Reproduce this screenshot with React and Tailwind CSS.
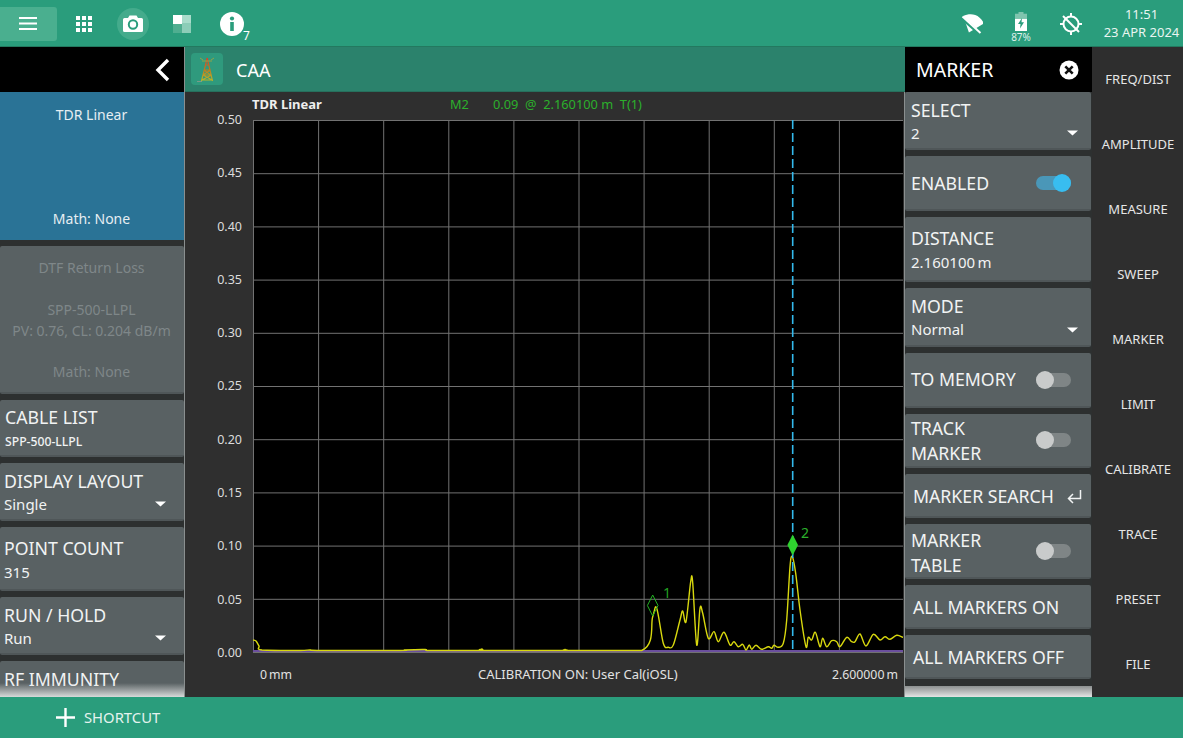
const tracePts = [[253,640],[256,641],[259,646],[262,650],[300,650.5],[310,650],[320,650.5],[400,650.5],[405,650],[425,649.5],[430,650.5],[478,650.5],[482,649],[486,650.5],[560,650.5],[565,649.5],[570,650.5],[641.7,650.5],[652.7,616.7],[656.7,608.3],[663.3,643.3],[668.3,647.3],[673.3,645],[680,620],[682.7,611],[686,621.7],[690.7,581.7],[692.7,582.7],[696.7,645],[700,608.3],[702.7,613.3],[708.3,638.3],[714,631.7],[718.3,641.7],[724,632.3],[730,645],[734,641.7],[738.3,646.7],[742.7,644.3],[746,650],[749.3,645],[751.7,649.3],[756,645.3],[761.7,649.3],[768.3,646.7],[771.7,648.3],[774,645.3],[778.3,647.3],[783.3,643.3],[786.7,620],[790,566.7],[792.3,556.7],[795.7,573.3],[800,610],[806,646.7],[808.3,637.3],[811.7,640],[815.3,632.3],[820,646.7],[822.7,638.3],[826.7,646.7],[831.7,640.7],[836.7,641.7],[840,646.7],[846.7,637.3],[851.7,641.7],[855,641.7],[860,634],[866,646],[873.3,634.3],[880,640],[885,636.7],[890,639.3],[896.7,635.3],[903,637.3]];

function smooth(pts) {
  let d = `M${pts[0][0]} ${pts[0][1]}`;
  for (let i = 0; i < pts.length - 1; i++) {
    const p0 = pts[i - 1] || pts[i], p1 = pts[i], p2 = pts[i + 1], p3 = pts[i + 2] || p2;
    const c1 = [p1[0] + (p2[0] - p0[0]) / 6, p1[1] + (p2[1] - p0[1]) / 6];
    const c2 = [p2[0] - (p3[0] - p1[0]) / 6, p2[1] - (p3[1] - p1[1]) / 6];
    const cap = v => Math.min(v, 650.5);
    d += ` C${c1[0].toFixed(1)} ${cap(c1[1]).toFixed(1)} ${c2[0].toFixed(1)} ${cap(c2[1]).toFixed(1)} ${p2[0]} ${p2[1]}`;
  }
  return d;
}
const trace = smooth(tracePts);

const yLabels = ["0.50","0.45","0.40","0.35","0.30","0.25","0.20","0.15","0.10","0.05","0.00"];
const menu = ["FREQ/DIST","AMPLITUDE","MEASURE","SWEEP","MARKER","LIMIT","CALIBRATE","TRACE","PRESET","FILE"];

function Caret() {
  return <svg width="11" height="6" viewBox="0 0 11 6"><path d="M0 0.5H11L5.5 5.5Z" fill="#fff"/></svg>;
}

function Card({ h, children, className = "" }) {
  return <div className={"shrink-0 bg-[#596163] border-b-2 border-[#4f5658] rounded-[2px] text-[#f1f3f3] " + className} style={{ height: h }}>{children}</div>;
}

function SelectCard({ h, label, value, px = "pl-[4px] pr-[18px]" }) {
  return (
    <Card h={h} className={"flex flex-col justify-center pt-[2px] " + px}>
      <div className="text-[17.7px] leading-[24px]">{label}</div>
      <div className="flex items-center justify-between text-[15px] leading-[23px]">
        <span>{value}</span><Caret />
      </div>
    </Card>
  );
}

function Toggle({ on }) {
  return (
    <div className={"relative w-[35px] h-[14px] rounded-full " + (on ? "bg-[#4a97b8]" : "bg-[#7f8586]")}>
      <div className={"absolute top-[-2px] w-[18px] h-[18px] rounded-full " + (on ? "right-0 bg-[#38bdf0]" : "left-0 bg-[#c9cbcb]")} />
    </div>
  );
}

function ToggleCard({ h, label, pt = "pt-[2px]" }) {
  return (
    <Card h={h} className="flex items-center justify-between pl-[6px] pr-[20px]">
      <div className={"text-[17.7px] leading-[25px] " + pt}>{label}</div>
      <Toggle on={label === "ENABLED"} />
    </Card>
  );
}

function TopBar() {
  return (
    <div className="h-[47px] shrink-0 bg-[#2a9d7c] flex items-center text-white border-b border-[#23795f] pt-[1px]">
      <div className="w-[57px] h-[34px] bg-[#4aaf8f] rounded-r-[3px] flex items-center justify-center">
        <svg width="18" height="13" viewBox="0 0 18 13" fill="#fff" className="mr-[2px]"><rect y="0" width="18" height="2"/><rect y="5.5" width="18" height="2"/><rect y="11" width="18" height="2"/></svg>
      </div>
      <div className="ml-[19px]">
        <svg width="16" height="16" viewBox="0 0 16 16" fill="#fff" className="block">
          {[0,6,12].map(x => [0,6,12].map(y => <rect key={x+"-"+y} x={x} y={y} width="4" height="4"/>))}
        </svg>
      </div>
      <div className="ml-[25px] w-[32px] h-[32px] rounded-full bg-[#44ab8c] flex items-center justify-center">
        <svg width="20" height="17" viewBox="0 0 20 17"><path d="M6.5 0.5H13.5L15 3H18.5A1.5 1.5 0 0 1 20 4.5V15.5A1.5 1.5 0 0 1 18.5 17H1.5A1.5 1.5 0 0 1 0 15.5V4.5A1.5 1.5 0 0 1 1.5 3H5Z" fill="#fff"/><circle cx="10" cy="9.5" r="4.2" fill="none" stroke="#2a9d7c" strokeWidth="2"/></svg>
      </div>
      <div className="ml-[24px]">
        <svg width="18" height="18" viewBox="0 0 18 18" className="block"><rect x="9" y="0" width="9" height="8" fill="#a9dccb"/><rect x="9" y="8" width="9" height="10" fill="#8ccdb8"/><rect x="0" y="9" width="9" height="9" fill="#4fae90"/><rect x="0" y="0" width="9" height="9" fill="#fff"/></svg>
      </div>
      <div className="ml-[29px] relative">
        <svg width="24" height="24" viewBox="0 0 24 24" className="block"><circle cx="12" cy="12" r="12" fill="#fff"/><rect x="10.2" y="10" width="3.6" height="9" fill="#2a9d7c"/><circle cx="12" cy="6.5" r="2.1" fill="#2a9d7c"/></svg>
        <span className="absolute left-[23px] top-[17px] text-[12px] leading-[14px]">7</span>
      </div>
      <div className="ml-auto mr-[1px] flex items-center">
        <svg width="22" height="20" viewBox="0 0 22 20" className="mr-[26px]">
          <g transform="rotate(20 11 10)"><path d="M0 5.5C3 2.5 7 0.5 11 0.5S19 2.5 22 5.5L11 19Z" fill="#fff"/></g>
          <path d="M0 3L19 20" stroke="#2a9d7c" strokeWidth="3.6"/>
          <path d="M1.5 2.5L19.5 19" stroke="#fff" strokeWidth="2"/>
        </svg>
        <div className="flex flex-col items-center w-[24px] mr-[27px] mt-[8px]">
          <svg width="12" height="19" viewBox="0 0 12 22" preserveAspectRatio="none"><rect x="3.5" y="0" width="5" height="3" fill="#7fc4ae"/><rect x="0" y="2" width="12" height="6" fill="#7fc4ae"/><rect x="0" y="8" width="12" height="14" fill="#fff"/><path d="M7 7L3 14H5.5L5 19L9 12H6.5Z" fill="#2a9d7c"/></svg>
          <span className="text-[10px] leading-[13px] text-[#dff1eb]">87%</span>
        </div>
        <svg width="22" height="22" viewBox="0 0 22 22" fill="none" stroke="#fff" strokeWidth="2" className="mr-[20px]"><circle cx="11" cy="11" r="7.5"/><path d="M3 3L19 19"/><path d="M11 0V3M11 19V22M0 11H3M19 11H22" /></svg>
        <div className="w-[80px] text-center text-[13px] leading-[18.5px] text-[#e9f5f1] mt-[-1px] pr-[1px]">
          <div>11:51</div><div className="whitespace-nowrap">23 APR 2024</div>
        </div>
      </div>
    </div>
  );
}

function LeftPanel() {
  return (
    <div className="w-[185px] shrink-0 flex flex-col bg-[#2d3030] border-r border-[#8a8f8f] relative overflow-hidden">
      <div className="h-[45px] shrink-0 bg-black flex items-center justify-end pr-[14px]">
        <svg width="15" height="24" viewBox="0 0 15 24" fill="none" stroke="#fff" strokeWidth="3.4"><path d="M13 2L3 12L13 22"/></svg>
      </div>
      <div className="flex flex-col gap-[6px]">
        <div className="h-[148px] bg-[#2a7396] text-[#e6eef2] text-[14px] text-center flex flex-col justify-between pt-[12px] pb-[11px] pr-[1px] shrink-0">
          <div className="leading-[21px]">TDR Linear</div>
          <div className="leading-[21px]">Math: None</div>
        </div>
        <Card h={148} className="text-center text-[14px] leading-[20.8px] !text-[#7f8789] pt-[12px] pr-[1px]">
          <div>DTF Return Loss</div>
          <div className="mt-[21px]">SPP-500-LLPL</div>
          <div>PV: 0.76, CL: 0.204 dB/m</div>
          <div className="mt-[21px]">Math: None</div>
        </Card>
        <Card h={57} className="px-[5px] flex flex-col justify-center">
          <div className="text-[17.7px] leading-[26px] mt-[1px]">CABLE LIST</div>
          <div className="text-[12.2px] leading-[20px] font-medium mt-[2px]">SPP-500-LLPL</div>
        </Card>
        <SelectCard h={58} label="DISPLAY LAYOUT" value="Single" />
        <Card h={64} className="px-[4px] flex flex-col justify-center">
          <div className="text-[17.7px] leading-[24px] mt-[3px]">POINT COUNT</div>
          <div className="text-[15px] leading-[24px]">315</div>
        </Card>
        <SelectCard h={58} label="RUN / HOLD" value="Run" />
        <Card h={58} className="px-[4px] pt-[6px]">
          <div className="text-[17.7px] leading-[24px]">RF IMMUNITY</div>
        </Card>
      </div>
      <div className="absolute left-0 right-0 bottom-0 h-[14px] bg-gradient-to-b from-transparent to-[#d8dada]" />
    </div>
  );
}

function Chart() {
  const xs = Array.from({ length: 11 }, (_, i) => 253.5 + i * 65.1);
  const ys = Array.from({ length: 11 }, (_, i) => 120.5 + i * 53.2);
  return (
    <svg width="650" height="533" viewBox="253 120 650 533" className="block bg-black">
      {xs.map(x => <line key={x} x1={x} x2={x} y1="120" y2="652" stroke="#727272" strokeWidth="1"/>)}
      {ys.map(y => <line key={y} x1="253" x2="903" y1={y} y2={y} stroke="#727272" strokeWidth="1"/>)}
      <line x1="253" x2="903" y1="651" y2="651" stroke="#6b4f9e" strokeWidth="2"/>
      <path d={trace} fill="none" stroke="#d8d80e" strokeWidth="1.4" strokeLinejoin="round"/>
      <line x1="792.7" x2="792.7" y1="120" y2="652" stroke="#33b9ec" strokeWidth="1.6" strokeDasharray="9 4"/>
      <path d="M792.7 534.5L798 545L792.7 555.5L787.4 545Z" fill="#2fd12f"/>
      <path d="M652.7 595L658 605.5L652.7 616L647.4 605.5Z" fill="none" stroke="#22b022" strokeWidth="1"/>
    </svg>
  );
}

function Center() {
  return (
    <div className="w-[720px] shrink-0 flex flex-col bg-[#2f2f2f] overflow-hidden">
      <div className="h-[45px] shrink-0 bg-[#2b826c] flex items-center pl-[6px] text-white border-b border-[#27705d]">
        <div className="w-[32px] h-[32px] rounded-[4px] bg-[#2f9a7d] flex items-center justify-center">
          <svg width="24" height="28" viewBox="0 0 24 28" fill="none">
            <defs><linearGradient id="tw" x1="0" y1="0" x2="0" y2="1"><stop offset="0" stopColor="#d8402a"/><stop offset="0.5" stopColor="#c07a20"/><stop offset="1" stopColor="#b6b82a"/></linearGradient></defs>
            <path d="M12.2 3L6.5 26M12.2 3L17.5 26M9 15H15.5M8 20H16.5M7 25H17M10 10H14.5M9 15L15.5 20M15.5 15L8 20M8 20L17 25M16.5 20L7 25" stroke="url(#tw)" strokeWidth="1.2"/>
            <path d="M7 6H17M5 3L8 5M19 3L16 5" stroke="#8fa24a" strokeWidth="1"/>
            <path d="M2 26.5H7" stroke="#7a9b8a" strokeWidth="1"/>
          </svg>
        </div>
        <span className="ml-[13px] text-[18px] pt-[2px]">CAA</span>
      </div>
      <div className="flex-1 flex flex-col border-r border-[#8a8f8f]">
        <div className="h-[28px] shrink-0 relative text-[12.8px] leading-[24px]">
          <span className="absolute left-[67px] top-0 font-bold text-[13px] text-[#eeeeee]">TDR Linear</span>
          <span className="absolute left-[265px] top-0 text-[#2cb02c]">M2</span>
          <span className="absolute left-[308px] top-0 text-[#2cb02c] whitespace-nowrap">0.09 &nbsp;@&nbsp; 2.160100 m &nbsp;T(1)</span>
        </div>
        <div className="flex">
          <div className="w-[68px] h-[533px] text-[12.5px] text-[#dcdcdc]">
            <div className="flex flex-col justify-between h-[551px] mt-[-9px] pr-[11px] text-right leading-[18px]">
              {yLabels.map(l => <div key={l}>{l}</div>)}
            </div>
          </div>
          <div className="relative">
            <Chart />
            <span className="absolute left-[548px] top-[402px] text-[14px] text-[#2cb02c]">2</span>
            <span className="absolute left-[410px] top-[462px] text-[14px] text-[#22a022]">1</span>
          </div>
        </div>
        <div className="flex items-center pl-[75px] pr-[6px] text-[12.3px] text-[#e2e2e2] h-[44px]">
          <span className="w-[218px]">0{"\u2009"}mm</span>
          <span className="text-[13px]">CALIBRATION ON: User Cal(iOSL)</span>
          <span className="ml-auto">2.600000{"\u2009"}m</span>
        </div>
      </div>
    </div>
  );
}

function PlainCard({ label, h = 44, children }) {
  return (
    <Card h={h} className="flex items-center justify-between pl-[8px] pr-[9px] pt-[3px] text-[17.7px]">
      <span>{label}</span>{children}
    </Card>
  );
}

function MarkerPanel() {
  return (
    <div className="w-[187px] shrink-0 flex flex-col bg-[#2d3030] relative overflow-hidden">
      <div className="h-[45px] shrink-0 bg-black flex items-center justify-between pl-[12px] pr-[13px] text-white">
        <span className="text-[19.5px] ml-[-1px]">MARKER</span>
        <svg width="20" height="20" viewBox="0 0 20 20"><circle cx="10" cy="10" r="9.5" fill="#fff"/><path d="M6.3 6.3L13.7 13.7M13.7 6.3L6.3 13.7" stroke="#111" strokeWidth="2.6"/></svg>
      </div>
      <div className="flex flex-col gap-[6px] pr-[1px]">
        <SelectCard h={58} label="SELECT" value="2" px="pl-[6px] pr-[13px]" />
        <ToggleCard h={55} label="ENABLED" />
        <Card h={65} className="px-[6px] flex flex-col justify-center">
          <div className="text-[17.7px] leading-[26px] mt-[1px]">DISTANCE</div>
          <div className="text-[15px] leading-[22px]">2.160100{"\u2009"}m</div>
        </Card>
        <SelectCard h={59} label="MODE" value="Normal" px="pl-[6px] pr-[13px]" />
        <ToggleCard h={55} label="TO MEMORY" pt="pt-0" />
        <ToggleCard h={54} label={<>TRACK<br/>MARKER</>} />
        <PlainCard label="MARKER SEARCH">
          <svg width="15" height="15" viewBox="0 0 15 15" fill="none" stroke="#f1f3f3" strokeWidth="1.5"><path d="M13.5 1V9.5H1.5M6 5L1.5 9.5L6 14"/></svg>
        </PlainCard>
        <ToggleCard h={55} label={<>MARKER<br/>TABLE</>} pt="pt-[4px]" />
        <PlainCard label="ALL MARKERS ON" />
        <PlainCard label="ALL MARKERS OFF" />
      </div>
      <div className="absolute left-0 right-0 bottom-0 h-[11px] bg-gradient-to-b from-[#8c9090] to-[#e4e5e5]" />
    </div>
  );
}

function RightMenu() {
  return (
    <div className="flex-1 flex flex-col bg-[#2e2e2e] text-[13px] text-[#e6e6e6] pl-[1px]">
      {menu.map(m => <div key={m} className="h-[65px] shrink-0 flex items-center justify-center">{m}</div>)}
    </div>
  );
}

export default function App() {
  return (
    <div className="w-[1183px] h-[738px] flex flex-col overflow-hidden bg-black" style={{ fontFamily: '"Noto Sans", sans-serif' }}>
      <TopBar />
      <div className="flex h-[650px] shrink-0">
        <LeftPanel />
        <Center />
        <MarkerPanel />
        <RightMenu />
      </div>
      <div className="flex-1 bg-[#2a9d7c] flex items-center pl-[56px] text-[#e4f3ee] text-[14.8px]">
        <svg width="19" height="19" viewBox="0 0 19 19" className="mr-[9px]"><path d="M9.5 0V19M0 9.5H19" stroke="#fff" strokeWidth="2.4"/></svg>
        SHORTCUT
      </div>
    </div>
  );
}
